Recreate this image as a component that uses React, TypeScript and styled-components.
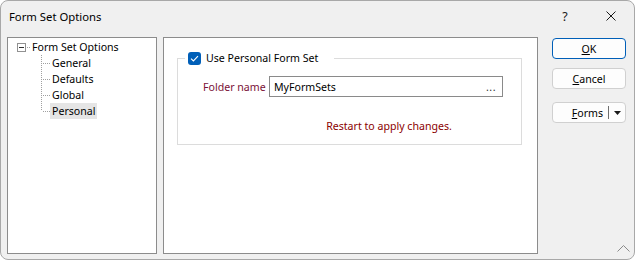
import React from "react";
import styled, { createGlobalStyle } from "styled-components";

const FONT = `"Noto Sans", "Segoe UI", sans-serif`;

const GlobalStyle = createGlobalStyle`
  html, body {
    margin: 0;
    padding: 0;
    background: #ffffff;
  }
`;

const Window = styled.div`
  position: relative;
  box-sizing: border-box;
  width: 635px;
  height: 260px;
  border: 1px solid #a8a8a8;
  border-radius: 8px;
  background: #f0f0f0;
  overflow: hidden;
  display: flex;
  flex-direction: column;
  font-family: ${FONT};
  color: #000000;
`;

const TitleBar = styled.div`
  height: 30px;
  display: flex;
  align-items: center;
  flex-shrink: 0;
`;

const Title = styled.div`
  flex: 1;
  padding-left: 8px;
  font-size: 11.3px;
`;

const TitleButton = styled.div`
  width: 46px;
  height: 30px;
  display: flex;
  align-items: center;
  justify-content: center;
  font-size: 12.5px;
  color: #1a1a1a;
`;

const Body = styled.div`
  flex: 1;
  display: flex;
  padding: 6px 8px 0 6px;
  font-size: 10.6px;
`;

const Panel = styled.div<{ $width: number }>`
  box-sizing: border-box;
  width: ${({ $width }) => $width}px;
  height: 217px;
  background: #ffffff;
  border: 1px solid #8c8c8c;
  flex-shrink: 0;
`;

const TreePanel = styled(Panel)`
  padding-top: 1px;
`;

const MainPanel = styled(Panel)`
  margin-left: 6px;
  padding: 12px 15px 0 13px;
`;

const TreeRow = styled.div<{ $indent: number }>`
  height: 16px;
  display: flex;
  align-items: center;
  padding-left: ${({ $indent }) => $indent}px;
`;

const TreeLabel = styled.span<{ $selected?: boolean }>`
  padding: 0 2px;
  line-height: 16px;
  background: ${({ $selected }) => ($selected ? "#e5e5e5" : "transparent")};
`;

const GroupBox = styled.fieldset`
  box-sizing: border-box;
  width: 345px;
  margin: 0;
  padding: 10px 17px 11px 25px;
  border: 1px solid #dcdcdc;
`;

const GroupLegend = styled.legend`
  display: flex;
  align-items: center;
  gap: 5px;
  height: 16px;
  margin-left: -18px;
  padding: 0 16px 0 3px;
`;

const CheckBox = styled.span`
  width: 13px;
  height: 13px;
  border-radius: 3px;
  background: #005fb8;
  display: flex;
  align-items: center;
  justify-content: center;
`;

const FieldGrid = styled.div`
  display: grid;
  grid-template-columns: 66px 234px;
  row-gap: 22px;
  align-items: center;
`;

const FieldLabel = styled.span`
  color: #7a1036;
`;

const TextBox = styled.div`
  box-sizing: border-box;
  height: 21px;
  display: flex;
  align-items: center;
  justify-content: space-between;
  padding: 0 6px 0 4px;
  background: #ffffff;
  border: 1px solid #8a8a8a;
`;

const Ellipsis = styled.span`
  color: #333333;
  letter-spacing: 0.5px;
`;

const Notice = styled.div`
  grid-column: 2;
  padding-left: 6px;
  text-align: center;
  color: #8b0000;
`;

const ButtonColumn = styled.div`
  margin-left: 14px;
  padding-top: 1px;
  width: 74px;
  display: flex;
  flex-direction: column;
`;

const Button = styled.div<{ $default?: boolean; $gap?: number }>`
  box-sizing: border-box;
  height: 21px;
  margin-top: ${({ $gap }) => $gap ?? 0}px;
  display: flex;
  align-items: center;
  justify-content: center;
  background: #fdfdfd;
  border: 1px solid ${({ $default }) => ($default ? "#005fb8" : "#d0d0d0")};
  border-radius: 4px;

  u {
    text-underline-offset: 1px;
  }
`;

const SplitLabel = styled.span`
  flex: 1;
  text-align: right;
  padding-right: 5px;
`;

const SplitDivider = styled.span`
  width: 1px;
  height: 13px;
  background: #6e6e6e;
`;

const SplitArrow = styled.span`
  width: 16px;
  display: flex;
  align-items: center;
  justify-content: center;
`;

const Grip = styled.div`
  position: absolute;
  right: 4px;
  bottom: 7px;
  display: flex;
`;

function Connector({ last }: { last?: boolean }) {
  return (
    <svg width="9" height="16" viewBox="0 0 9 16" shapeRendering="crispEdges">
      <line x1="0.5" y1="0" x2="0.5" y2={last ? 8 : 16} stroke="#a0a0a0" strokeDasharray="1 1" />
      <line x1="2" y1="8.5" x2="9" y2="8.5" stroke="#a0a0a0" strokeDasharray="1 1" />
    </svg>
  );
}

function Collapse() {
  return (
    <svg width="13" height="9" viewBox="0 0 13 9" shapeRendering="crispEdges">
      <rect x="0.5" y="0.5" width="8" height="8" fill="#fff" stroke="#919191" />
      <line x1="2" y1="4.5" x2="7" y2="4.5" stroke="#303030" />
      <line x1="10" y1="4.5" x2="13" y2="4.5" stroke="#a0a0a0" strokeDasharray="1 1" />
    </svg>
  );
}

const children = ["General", "Defaults", "Global", "Personal"];

export default function App() {
  return (
    <>
      <GlobalStyle />
      <Window>
        <TitleBar>
          <Title>Form Set Options</Title>
          <TitleButton>?</TitleButton>
          <TitleButton>
            <svg width="10" height="10" viewBox="0 0 10 10">
              <path d="M0.5 0.5 L9.5 9.5 M9.5 0.5 L0.5 9.5" stroke="#1a1a1a" strokeWidth="1" />
            </svg>
          </TitleButton>
        </TitleBar>
        <Body>
          <TreePanel $width={150}>
            <TreeRow $indent={9}>
              <Collapse />
              <TreeLabel>Form Set Options</TreeLabel>
            </TreeRow>
            {children.map((name, i) => (
              <TreeRow key={name} $indent={33}>
                <Connector last={i === children.length - 1} />
                <TreeLabel $selected={name === "Personal"}>{name}</TreeLabel>
              </TreeRow>
            ))}
          </TreePanel>
          <MainPanel $width={375}>
            <GroupBox>
              <GroupLegend>
                <CheckBox>
                  <svg width="9" height="7" viewBox="0 0 9 7">
                    <path d="M1 3.6 L3.4 6 L8 1.2" fill="none" stroke="#ffffff" strokeWidth="1.1" />
                  </svg>
                </CheckBox>
                <span>Use Personal Form Set</span>
              </GroupLegend>
              <FieldGrid>
                <FieldLabel>Folder name</FieldLabel>
                <TextBox>
                  <span>MyFormSets</span>
                  <Ellipsis>...</Ellipsis>
                </TextBox>
                <Notice>Restart to apply changes.</Notice>
              </FieldGrid>
            </GroupBox>
          </MainPanel>
          <ButtonColumn>
            <Button $default>
              <span><u>O</u>K</span>
            </Button>
            <Button $gap={9}>
              <span><u>C</u>ancel</span>
            </Button>
            <Button $gap={13}>
              <SplitLabel><u>F</u>orms</SplitLabel>
              <SplitDivider />
              <SplitArrow>
                <svg width="7" height="4" viewBox="0 0 7 4">
                  <path d="M0 0 H7 L3.5 4 Z" fill="#1a1a1a" />
                </svg>
              </SplitArrow>
            </Button>
          </ButtonColumn>
        </Body>
        <Grip>
          <svg width="13" height="7" viewBox="0 0 13 7">
            <path d="M0.5 6.5 L6.5 0.5 L12.5 6.5" fill="none" stroke="#8a8a8a" strokeWidth="1" />
          </svg>
        </Grip>
      </Window>
    </>
  );
}
